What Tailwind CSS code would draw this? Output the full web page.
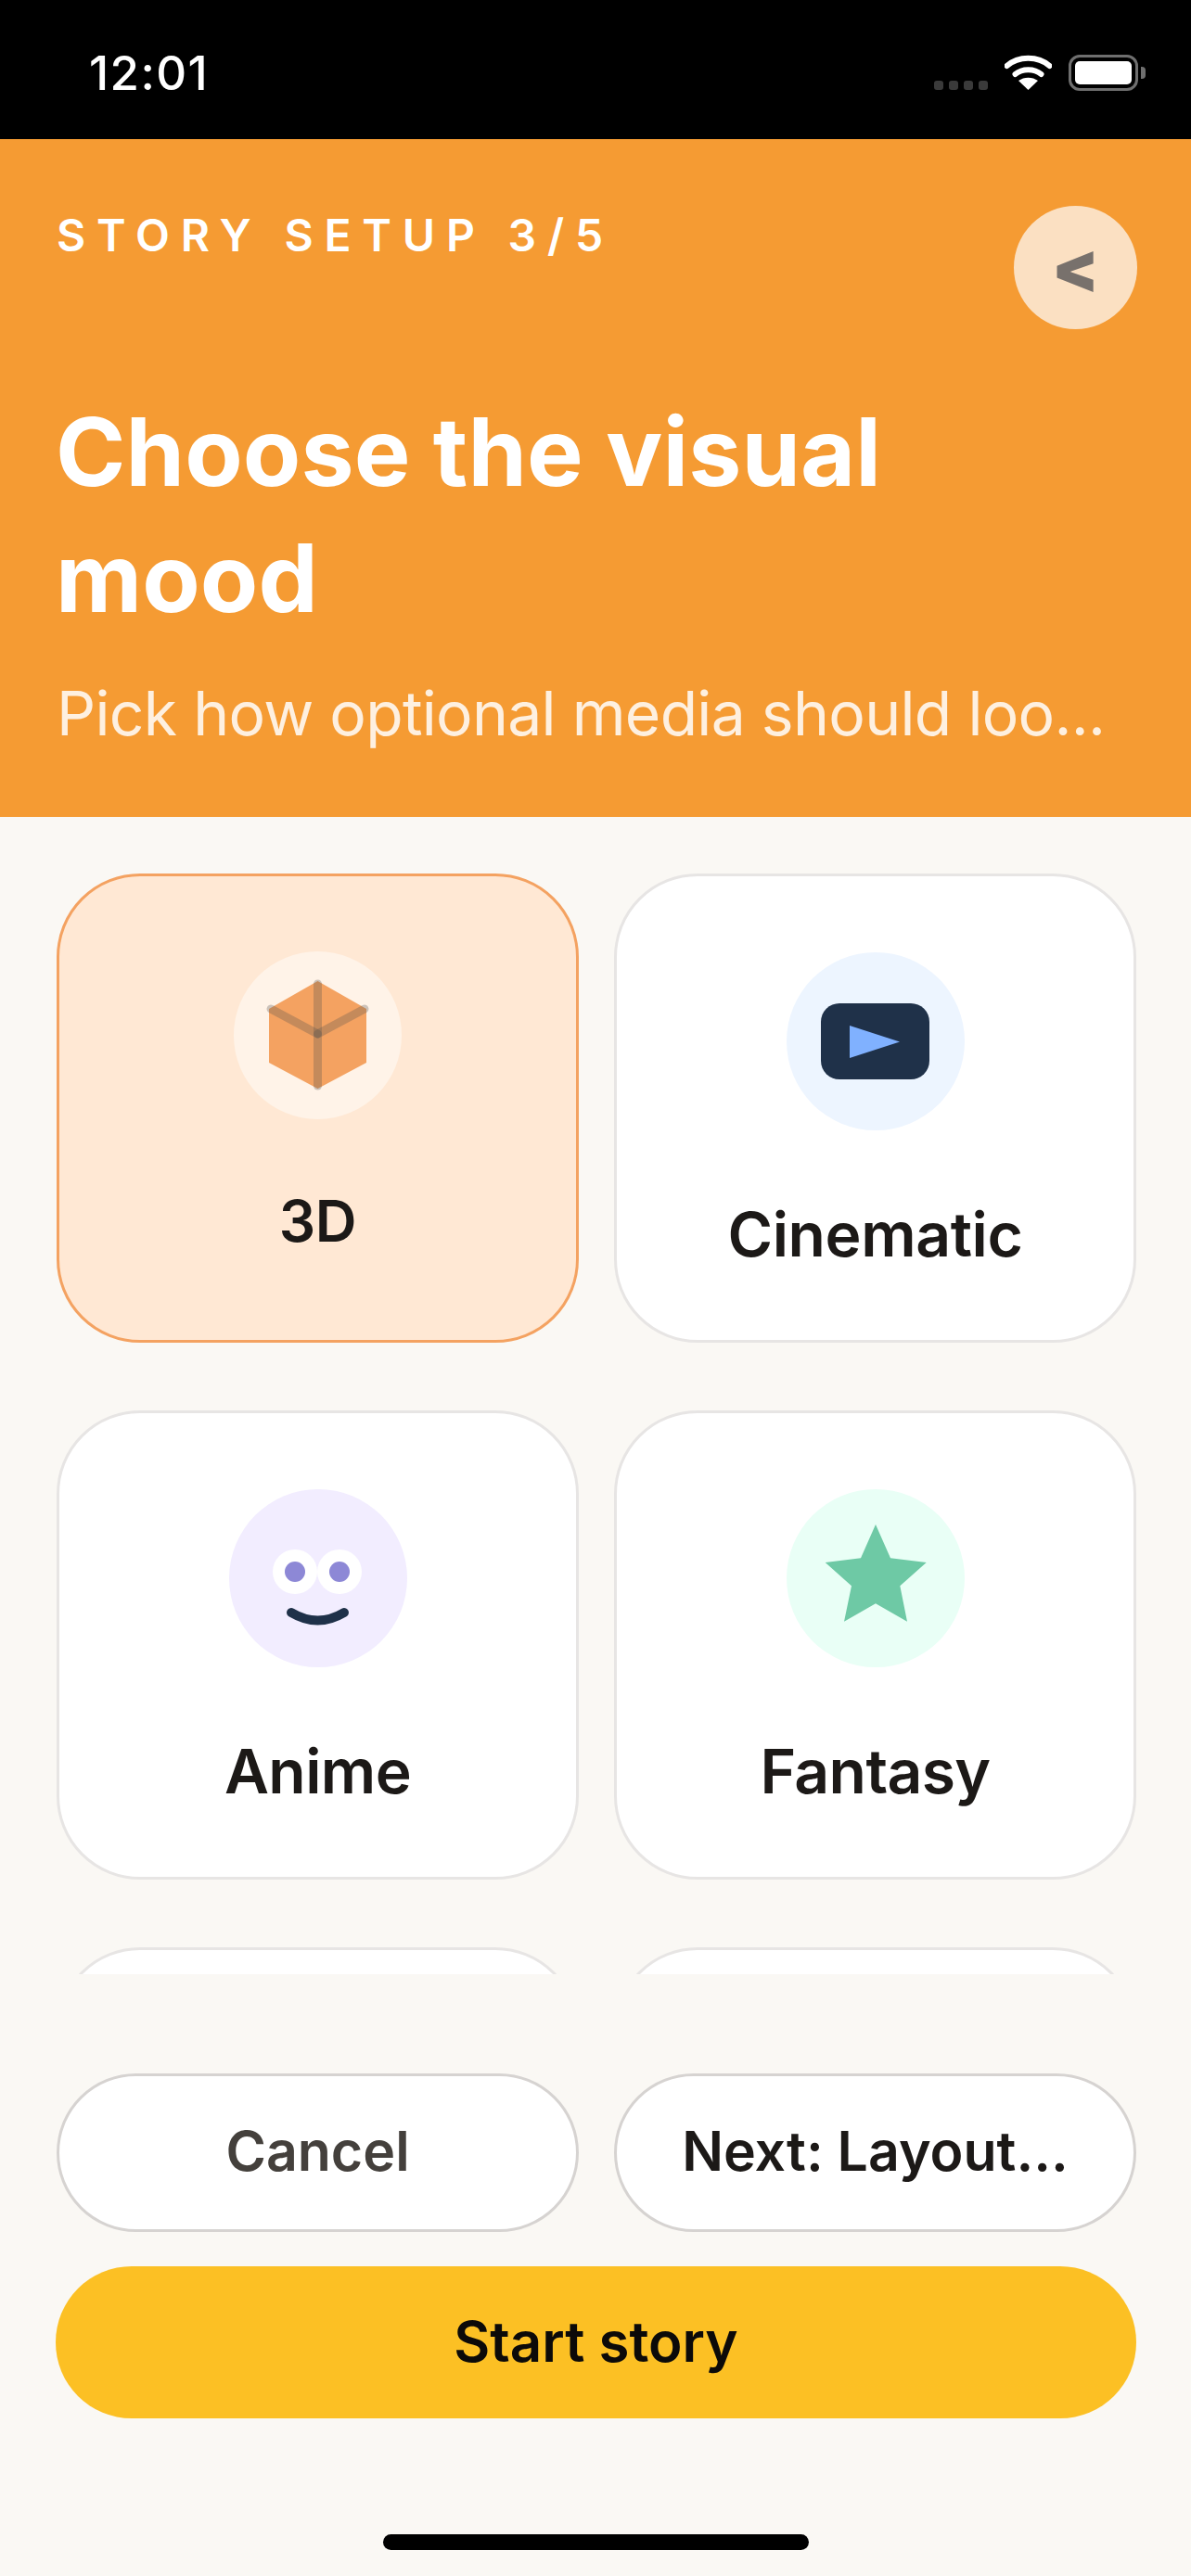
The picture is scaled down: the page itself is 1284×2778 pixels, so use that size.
<!DOCTYPE html>
<html lang="en">
<head>
    <meta charset="UTF-8">
    <meta name="viewport" content="width=device-width, initial-scale=1.0">
    <title>Story setup</title>
    <script src="https://cdn.jsdelivr.net/npm/@tailwindcss/browser@4"></script>
</head>
<body class="bg-[#faf8f4]">
    <div class="w-[1284px] h-[2778px] flex flex-col overflow-hidden font-['Inter',sans-serif] text-[#1c1917]">
        <!-- status bar -->
        <div class="h-[150px] shrink-0 bg-black flex justify-between pl-[96px] pr-[49px]">
            <div class="text-white text-[51px] leading-[62px] font-medium tracking-[1.400px] pt-[48px]">12:01</div>
            <div class="flex items-start pt-[59px]">
                <div class="flex gap-[6px] mt-[28px]">
                    <div class="w-[10px] h-[10px] rounded-[3px] bg-[#3a3a3a]"></div>
                    <div class="w-[10px] h-[10px] rounded-[3px] bg-[#3a3a3a]"></div>
                    <div class="w-[10px] h-[10px] rounded-[3px] bg-[#3a3a3a]"></div>
                    <div class="w-[10px] h-[10px] rounded-[3px] bg-[#3a3a3a]"></div>
                </div>
                <svg class="ml-[18px]" width="51" height="38" viewBox="0 0 51 38">
                    <path d="M2.500 12 C15 1 36 1 48.500 12" fill="none" stroke="#fff" stroke-width="6" stroke-linecap="round"/>
                    <path d="M11.500 21 C19 14.500 32 14.500 39.500 21" fill="none" stroke="#fff" stroke-width="6" stroke-linecap="round"/>
                    <path d="M25.500 38 L15 28 C21 23.500 30 23.500 36 28 Z" fill="#fff"/>
                </svg>
                <div class="ml-[18px] w-[75px] h-[39px] rounded-[12px] border-[3px] border-[#6f6f6f] p-[4px]">
                    <div class="w-full h-full rounded-[5px] bg-white"></div>
                </div>
                <div class="ml-[3px] mt-[13px] w-[5px] h-[13px] rounded-r-[4px] bg-[#6f6f6f]"></div>
            </div>
        </div>

        <!-- header -->
        <div class="h-[731px] shrink-0 bg-[#f59b33] pl-[61px] pr-[58px] pt-[72px] text-white">
            <div class="flex justify-between items-start">
                <div class="text-[48px] leading-[58px] font-semibold tracking-[11.800px] pt-[3px]">STORY SETUP 3/5</div>
                <div class="w-[133px] h-[133px] rounded-full bg-[#fbe0c2] flex items-center justify-center pb-[2px] text-[#78716c] text-[74px] leading-[74px] font-black">&lt;</div>
            </div>
            <div class="-ml-px mt-[64px] text-[102px] leading-[136px] font-bold tracking-[0.100px]">Choose the visual mood</div>
            <div class="mt-[36px] text-[66px] leading-[84px] tracking-[-0.700px] text-white/85 whitespace-nowrap">Pick how optional media should loo...</div>
        </div>

        <!-- options -->
        <div class="h-[1248px] shrink-0 overflow-hidden pt-[61px] pl-[61px] pr-[59px]">
            <div class="grid grid-cols-2 gap-x-[38px] gap-y-[73px]">
                <div class="h-[506px] rounded-[90px] border-[3px] border-[#f4a261] bg-[#ffe8d4] flex flex-col items-center pt-[81px]">
                    <div class="w-[181px] h-[181px] rounded-full bg-[#fff3e8]">
                        <svg width="181" height="181" viewBox="0 0 181 181">
                            <path d="M90.500 32 L143 62 L143 120 L90.500 148 L38 120 L38 62 Z" fill="#f4a261"/>
                            <g stroke="#57534e" stroke-opacity="0.3" stroke-width="9" stroke-linecap="round">
                                <path d="M90.500 35 L90.500 145"/>
                                <path d="M40 62 L90.500 89"/>
                                <path d="M141 62 L90.500 89"/>
                            </g>
                        </svg>
                    </div>
                    <div class="mt-[72px] text-[62px] leading-[76px] font-semibold tracking-[-0.400px]">3D</div>
                </div>
                <div class="h-[506px] rounded-[90px] border-[3px] border-[#e7e5e4] bg-white flex flex-col items-center pt-[82px]">
                    <div class="w-[192px] h-[192px] rounded-full bg-[#edf5ff] flex items-center justify-center">
                        <div class="w-[117px] h-[82px] rounded-[20px] bg-[#1f3149] flex items-center pl-[31px]">
                            <svg width="54" height="35" viewBox="0 0 54 35"><path d="M0 0 L54 17.500 L0 35 Z" fill="#80b1ff"/></svg>
                        </div>
                    </div>
                    <div class="mt-[72px] text-[66px] leading-[80px] font-semibold tracking-[-0.400px]">Cinematic</div>
                </div>
                <div class="h-[506px] rounded-[90px] border-[3px] border-[#e7e5e4] bg-white flex flex-col items-center pt-[82px]">
                    <div class="w-[192px] h-[192px] rounded-full bg-[#f2edff]">
                        <svg width="192" height="192" viewBox="0 0 192 192">
                            <circle cx="71" cy="89" r="24" fill="#fff"/>
                            <circle cx="119" cy="89" r="24" fill="#fff"/>
                            <circle cx="71" cy="89" r="11" fill="#8d88d6"/>
                            <circle cx="119" cy="89" r="11" fill="#8d88d6"/>
                            <path d="M67 133 Q95.500 150 124 133" fill="none" stroke="#1f3149" stroke-width="10" stroke-linecap="round"/>
                        </svg>
                    </div>
                    <div class="mt-[72px] text-[66px] leading-[80px] font-semibold tracking-[-0.600px]">Anime</div>
                </div>
                <div class="h-[506px] rounded-[90px] border-[3px] border-[#e7e5e4] bg-white flex flex-col items-center pt-[82px]">
                    <div class="w-[192px] h-[192px] rounded-full bg-[#e9fff6]">
                        <svg width="192" height="192" viewBox="0 0 192 192">
                            <path d="M96 38 L112 74.300 L150.700 79 L122.300 104.300 L130 142.700 L96 123.300 L62 142.700 L70 104.300 L41.700 79 L80 74.300 Z" fill="#6ec9a5"/>
                        </svg>
                    </div>
                    <div class="mt-[72px] text-[66px] leading-[80px] font-semibold tracking-[-0.600px]">Fantasy</div>
                </div>
                <div class="h-[506px] rounded-[90px] border-[3px] border-[#e7e5e4] bg-white"></div>
                <div class="h-[506px] rounded-[90px] border-[3px] border-[#e7e5e4] bg-white"></div>
            </div>
        </div>

        <!-- footer actions -->
        <div class="flex-1 pl-[61px] pr-[59px] pt-[107px]">
            <div class="grid grid-cols-2 gap-[38px]">
                <div class="h-[171px] rounded-full border-[3px] border-[#d6d3d1] bg-white flex items-center justify-center pb-[3px] text-[59px] font-semibold text-[#44403c]">Cancel</div>
                <div class="h-[171px] rounded-full border-[3px] border-[#d6d3d1] bg-white flex items-center justify-center pb-[3px] text-[59px] font-semibold whitespace-nowrap">Next: Layout...</div>
            </div>
            <div class="-ml-px mt-[37px] h-[164px] rounded-full bg-[#fcc024] flex items-center justify-center pb-[3px] text-[60px] font-semibold text-[#0c0a09]">Start story</div>
            <div class="mt-[125px] ml-[352px] w-[459px] h-[17px] rounded-full bg-black"></div>
        </div>
    </div>
</body>
</html>
